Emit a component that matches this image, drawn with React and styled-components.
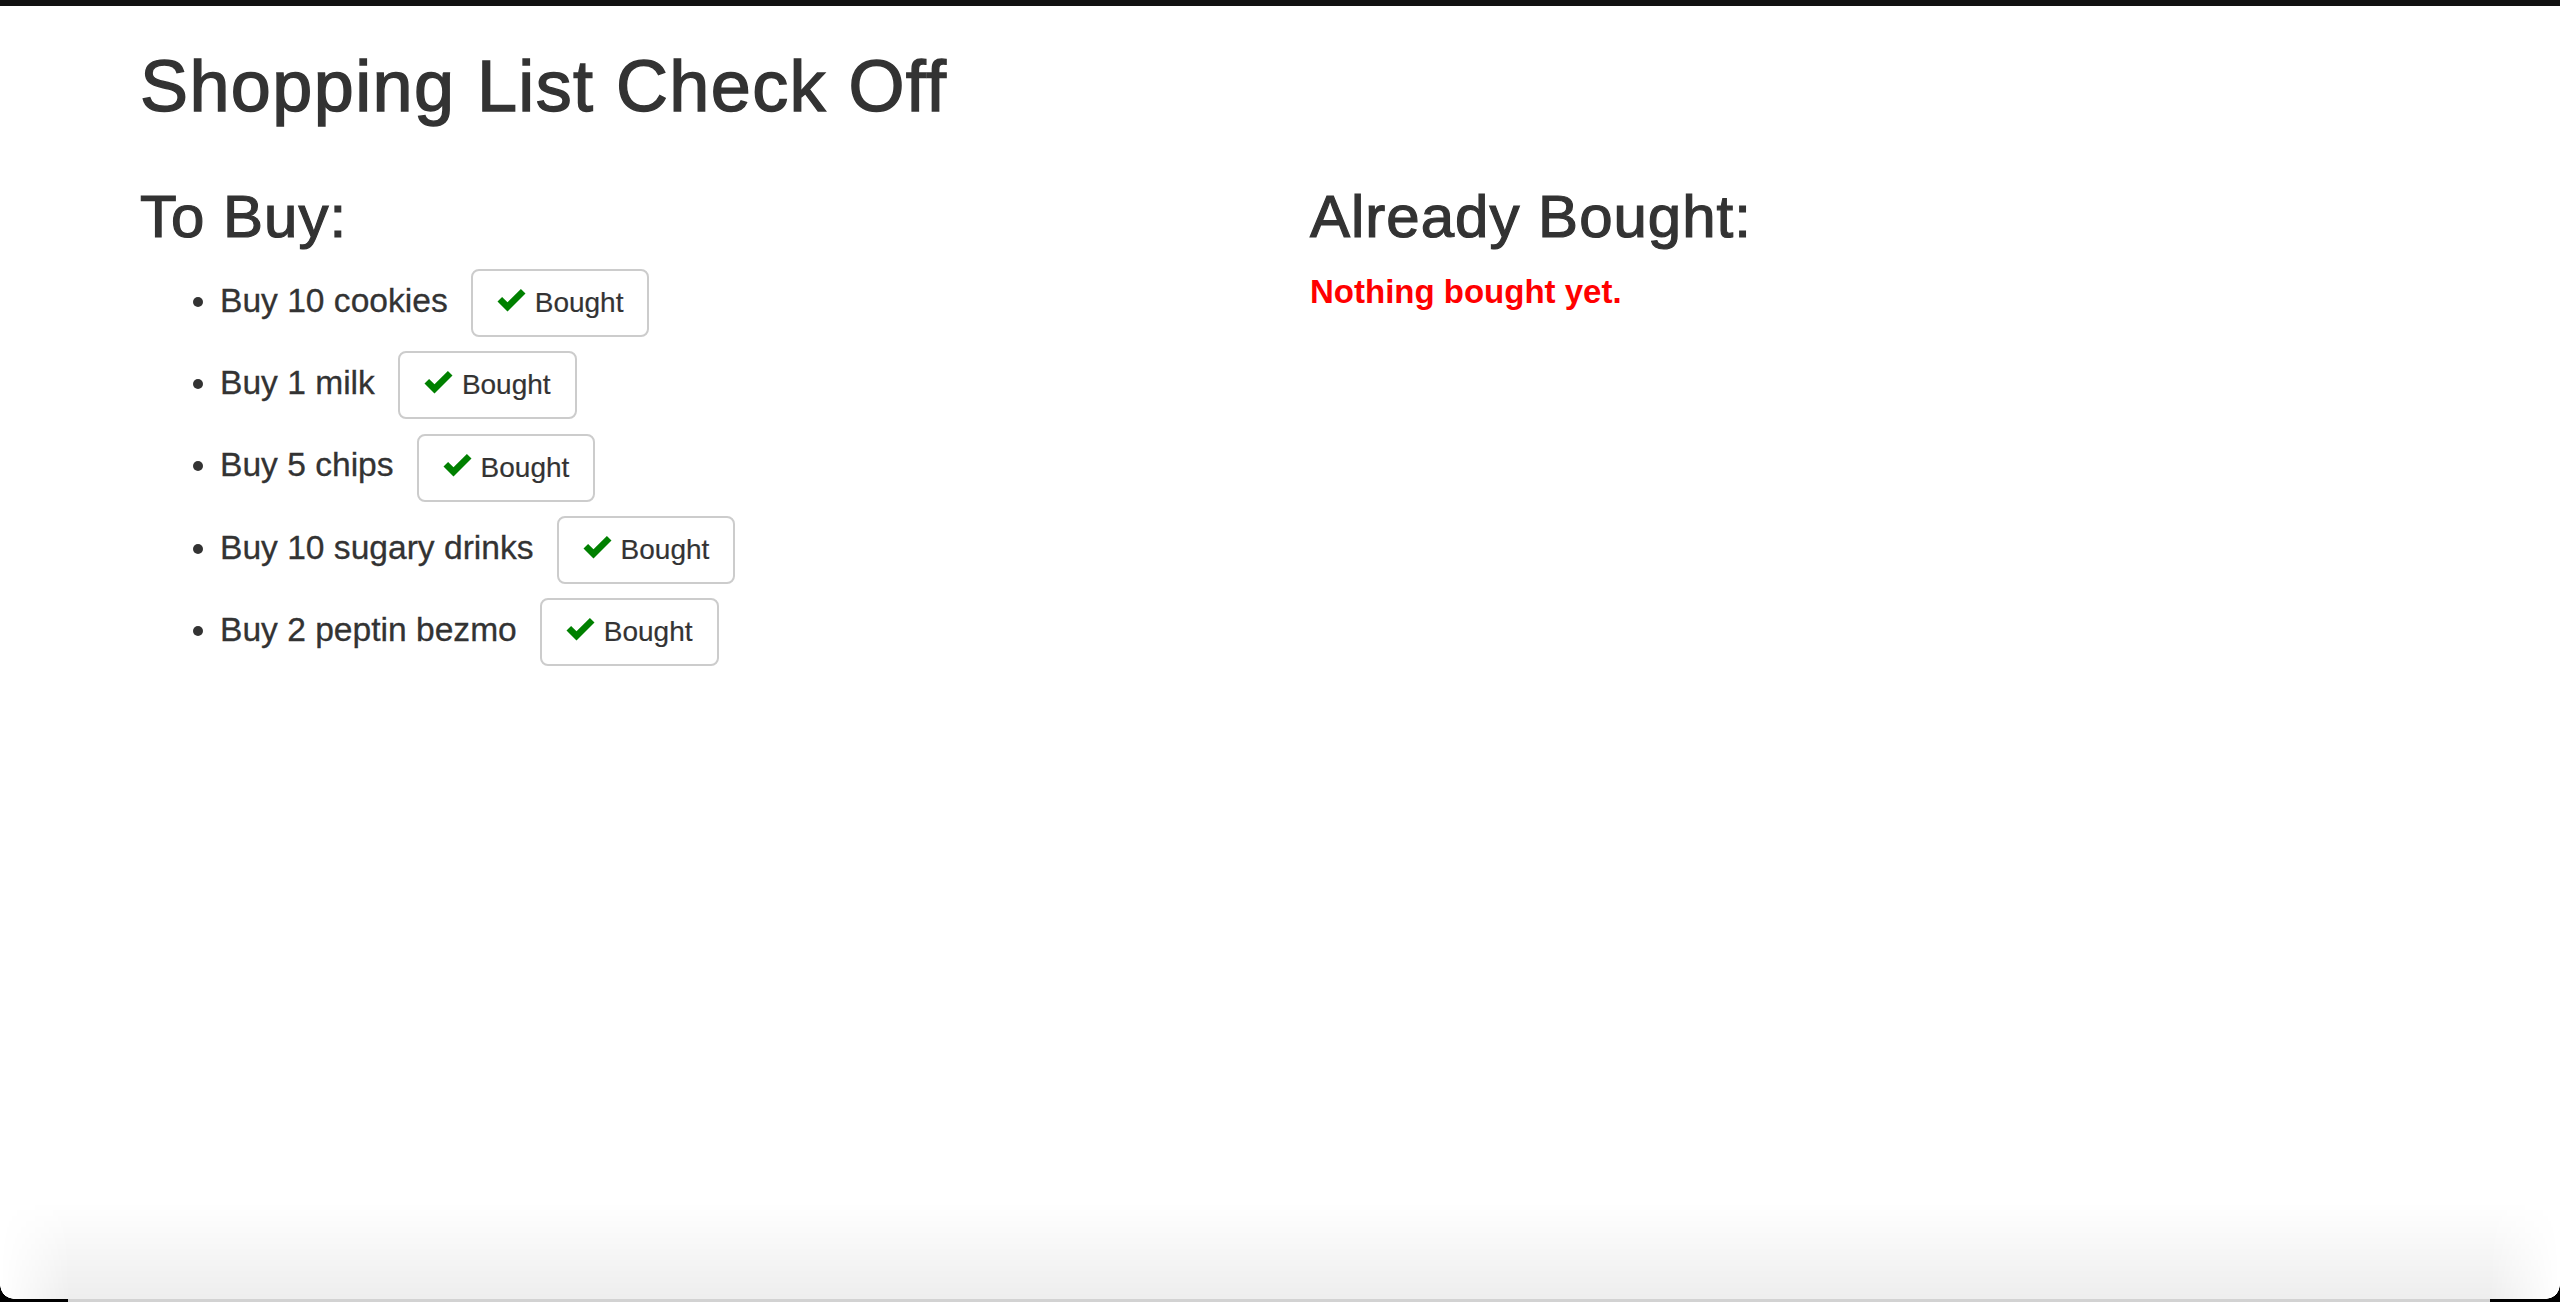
import React from 'react';
import styled, { createGlobalStyle } from 'styled-components';

const items = [
  'Buy 10 cookies',
  'Buy 1 milk',
  'Buy 5 chips',
  'Buy 10 sugary drinks',
  'Buy 2 peptin bezmo',
];

const GlobalStyle = createGlobalStyle`
  html, body {
    margin: 0;
    background: #fff;
  }
  body {
    font-family: "Liberation Sans", Arial, Helvetica, sans-serif;
    font-size: 28px;
    line-height: 1.42857;
    color: #333;
  }
  * {
    box-sizing: border-box;
  }
`;

const CheckIcon = () => (
  <svg width="29" height="23" viewBox="0 0 28 23" aria-hidden="true">
    <polygon points="0,12.5 4.6,7.9 10,13.3 23.4,0 28,4.6 10,22.6" fill="#008000" />
  </svg>
);

const App = () => {
  return (
    <>
      <GlobalStyle />
      <TopBar />
      <Container>
        <Title>Shopping List Check Off</Title>
        <Row>
          <Column>
            <Heading>To Buy:</Heading>
            <List>
              {items.map((item) => (
                <Item key={item}>
                  {item}
                  <BoughtButton type="button">
                    <IconSlot>
                      <CheckIcon />
                    </IconSlot>
                    Bought
                  </BoughtButton>
                </Item>
              ))}
            </List>
          </Column>
          <Column>
            <Heading>Already Bought:</Heading>
            <EmptyMessage>Nothing bought yet.</EmptyMessage>
          </Column>
        </Row>
      </Container>
      <BottomShade />
      <BottomEdge>
        <Corner side="left" />
        <Corner side="right" />
      </BottomEdge>
    </>
  );
};

export default App;

const TopBar = styled.div`
  height: 6px;
  background: #111;
`;
const Container = styled.div`
  max-width: 2340px;
  margin: 0 auto;
  padding: 0 30px;
`;
const Title = styled.h1`
  font-size: 72px;
  font-weight: 500;
  line-height: 1.1;
  letter-spacing: 1.4px;
  -webkit-text-stroke: 1.4px #333;
  margin: 41px 0 20px;
`;
const Row = styled.div`
  display: grid;
  grid-template-columns: 1fr 1fr;
  margin: 0 -30px;
`;
const Column = styled.div`
  padding: 0 30px;
`;
const Heading = styled.h2`
  font-size: 60px;
  font-weight: 500;
  line-height: 1.1;
  letter-spacing: 1px;
  -webkit-text-stroke: 1.2px #333;
  margin: 38px 0 18px;
`;
const List = styled.ul`
  margin: 0 0 20px;
  padding-left: 80px;
`;
const Item = styled.li`
  font-size: 33.6px;
  line-height: 66px;
  margin-bottom: 13px;
  -webkit-text-stroke: 0.3px #333;
`;
const BoughtButton = styled.button`
  display: inline-block;
  vertical-align: middle;
  margin-left: 23px;
  padding: 12px 24px;
  font-family: inherit;
  font-size: 28px;
  line-height: 40px;
  color: #333;
  background: #fff;
  border: 2px solid #ccc;
  border-radius: 8px;
  cursor: pointer;
  -webkit-text-stroke: 0.2px #333;
`;
const IconSlot = styled.span`
  display: inline-block;
  margin-right: 9px;
  line-height: 0;
  vertical-align: baseline;
`;
const EmptyMessage = styled.div`
  color: #ff0000;
  font-weight: bold;
  font-size: 33px;
`;
const BottomShade = styled.div`
  position: fixed;
  left: 0;
  right: 0;
  bottom: 0;
  height: 100px;
  pointer-events: none;
  background: linear-gradient(to bottom, rgba(0, 0, 0, 0), rgba(0, 0, 0, 0.07));
  -webkit-mask-image: linear-gradient(to right, transparent, #000 70px, #000 calc(100% - 70px), transparent);
  mask-image: linear-gradient(to right, transparent, #000 70px, #000 calc(100% - 70px), transparent);
`;
const BottomEdge = styled.div`
  position: fixed;
  left: 0;
  right: 0;
  bottom: 0;
  height: 3px;
  pointer-events: none;
  background: linear-gradient(
    to right,
    #000 68px,
    #d2d2d2 68px,
    #d2d2d2 calc(100% - 70px),
    #000 calc(100% - 70px)
  );
`;
const Corner = styled.div`
  position: absolute;
  bottom: 3px;
  ${(props) => (props.side === 'left' ? 'left: 0;' : 'right: 0;')}
  width: 14px;
  height: 14px;
  background: ${(props) =>
    props.side === 'left'
      ? 'radial-gradient(circle at 100% 0, transparent 13.5px, #000 14px)'
      : 'radial-gradient(circle at 0 0, transparent 13.5px, #000 14px)'};
`;
